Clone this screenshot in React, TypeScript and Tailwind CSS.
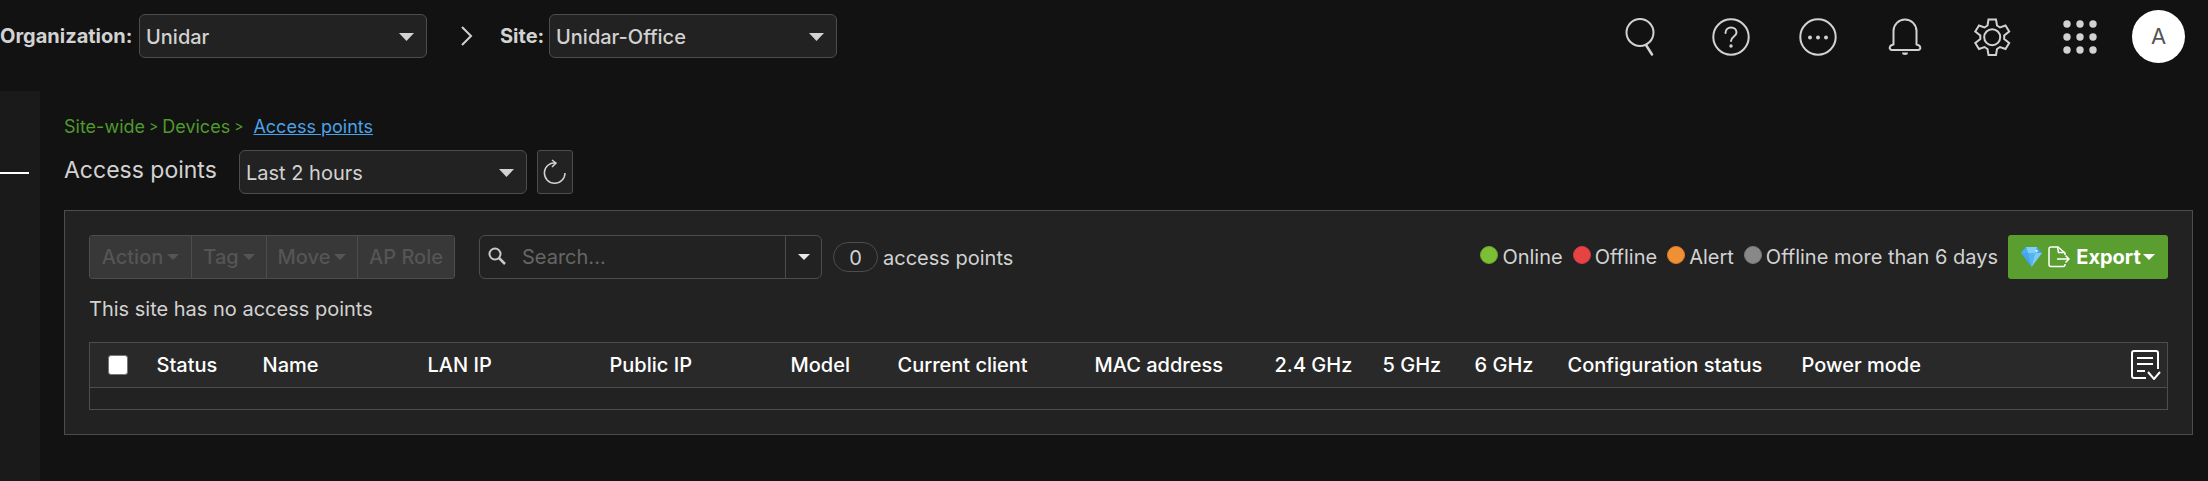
import type { ReactNode } from "react";

const columns = [
  { label: "Status", width: "w-[106px]" },
  { label: "Name", width: "w-[165px]" },
  { label: "LAN IP", width: "w-[182px]" },
  { label: "Public IP", width: "w-[181px]" },
  { label: "Model", width: "w-[107px]" },
  { label: "Current client", width: "w-[197px]" },
  { label: "MAC address", width: "w-[180px]" },
  { label: "2.4 GHz", width: "w-[108px]" },
  { label: "5 GHz", width: "w-[92px]" },
  { label: "6 GHz", width: "w-[93px]" },
  { label: "Configuration status", width: "w-[234px]" },
  { label: "Power mode", width: "" },
];

const legend = [
  { label: "Online", color: "bg-[#7bbf35] border-[#6aa82c]" },
  { label: "Offline", color: "bg-[#e84343] border-[#d83a4a]" },
  { label: "Alert", color: "bg-[#f09035] border-[#e0792b]" },
  { label: "Offline more than 6 days", color: "bg-[#888888] border-[#7b7b7b]" },
];

const bulkActions = [
  { label: "Action", width: "w-[102px]", caret: true },
  { label: "Tag", width: "w-[75px]", caret: true },
  { label: "Move", width: "w-[91px]", caret: true },
  { label: "AP Role", width: "w-[96px]", caret: false },
];

function Caret({ className = "w-3 h-1.5" }: { className?: string }) {
  return (
    <svg viewBox="0 0 14 8" preserveAspectRatio="none" className={`shrink-0 ${className}`} fill="currentColor" aria-hidden="true">
      <path d="M0 0h14L7 8z" />
    </svg>
  );
}

function Dropdown({ id, label, value, bold }: { id: string; label?: string; value: string; bold?: boolean }) {
  return (
    <div className="relative w-72">
      <select
        id={id}
        aria-label={label}
        className={`h-11 w-full appearance-none rounded-md border border-[#4d4d4d] bg-[#222222] pl-1.5 pr-9 pt-0.5 text-xl text-[#d2d2d2] ${bold ? "font-medium" : ""}`}
      >
        <option>{value}</option>
      </select>
      <Caret className="pointer-events-none absolute right-[13px] top-[19px] h-2 w-[15px] text-[#d2d2d2]" />
    </div>
  );
}

function IconButton({ label, children }: { label: string; children: ReactNode }) {
  return (
    <button type="button" aria-label={label} className="flex size-10 items-center justify-center text-[#d2d2d2]">
      <svg viewBox="0 0 40 40" className="size-10" fill="none" stroke="currentColor" strokeWidth="2" strokeLinejoin="round" strokeLinecap="round">
        {children}
      </svg>
    </button>
  );
}

function Header() {
  return (
    <header className="flex h-[91px] items-start justify-between pr-[23px]">
      <div className="flex items-center pt-3.5 text-[#d2d2d2]">
        <label htmlFor="organization" className="w-[139px] whitespace-nowrap text-xl font-bold">
          Organization:
        </label>
        <Dropdown id="organization" value="Unidar" bold />
        <svg viewBox="0 0 12 20" className="ml-[34px] mr-[27px] h-5 w-3" fill="none" stroke="currentColor" strokeWidth="2" aria-hidden="true">
          <path d="M1 1l9 9-9 9" />
        </svg>
        <label htmlFor="site" className="w-[49px] whitespace-nowrap text-xl font-bold">
          Site:
        </label>
        <Dropdown id="site" value="Unidar-Office" bold />
      </div>

      <div className="flex items-center gap-[47px] pt-2.5">
        <IconButton label="Search">
          <ellipse cx="16" cy="15.500" rx="13.500" ry="13.500" />
          <path d="M22 28l6 9.500" strokeWidth="2.5" />
        </IconButton>
        <IconButton label="Help">
          <circle cx="20" cy="20" r="17.7" />
          <path d="M14.500 16c0-3.500 2.500-5.500 5.500-5.500s5.500 2 5.500 5c0 4-5.500 4-5.500 8.500" />
          <circle cx="20" cy="29" r="1.700" fill="currentColor" stroke="none" />
        </IconButton>
        <IconButton label="More">
          <circle cx="20" cy="20" r="17.7" />
          <g fill="currentColor" stroke="none">
            <circle cx="12" cy="20.500" r="2" />
            <circle cx="20" cy="20.500" r="2" />
            <circle cx="28" cy="20.500" r="2" />
          </g>
        </IconButton>
        <IconButton label="Notifications">
          <path d="M8.500 27.500V14a11.500 11.500 0 0 1 23 0v13.500c4.500 .5 5 5.500 1.500 5.500H7c-3.500 0-3-5 1.500-5.500z" />
          <path d="M17 35.500h6a3 2.500 0 0 1-6 0z" fill="currentColor" stroke="none" />
        </IconButton>
        <IconButton label="Settings">
          <path
            strokeLinejoin="miter"
            d="M16.500 2.500h7.500l1 6 3 2 5.500-2 3.700 6-5 4v3.500l5 4-3.700 6-5.500-2-3 2-1 6h-7.500l-1-6-3-2-5.500 2-3.700-6 5-4v-3.500l-5-4 3.700-6 5.500 2 3-2z"
          />
          <circle cx="20.200" cy="20.200" r="8" />
        </IconButton>
        <IconButton label="Apps">
          <g fill="currentColor" stroke="none">
            {[7, 20, 33].map((y) => [8, 21, 34].map((x) => <circle key={`${x}-${y}`} cx={x} cy={y} r="3.700" />))}
          </g>
        </IconButton>
        <button type="button" aria-label="Account" className="-ml-[14px] size-[53px] rounded-full bg-white text-[22px] text-[#555555]">
          A
        </button>
      </div>
    </header>
  );
}

function Toolbar() {
  return (
    <div className="flex items-center">
      <div className="flex overflow-hidden rounded-[3px] border border-[#4d4d4d]">
        {bulkActions.map((action) => (
          <button
            key={action.label}
            type="button"
            disabled
            className={`flex h-[42px] shrink-0 items-center justify-center gap-1 whitespace-nowrap border-r border-[#4d4d4d] bg-[#383838] text-xl font-medium text-[#555555] last:border-r-0 ${action.width}`}
          >
            {action.label}
            {action.caret && <Caret />}
          </button>
        ))}
      </div>

      <div className="ml-6 flex h-11 w-[343px] items-center rounded-md border border-[#4d4d4d]">
        <svg viewBox="0 0 18 18" className="mb-0.5 ml-2 mr-4 size-[18px] shrink-0 text-[#c8c8c8]" fill="none" stroke="currentColor" strokeWidth="2" aria-hidden="true">
          <circle cx="7" cy="7" r="5.500" />
          <path d="M11 11l6 6" strokeWidth="2.500" />
        </svg>
        <input
          type="text"
          aria-label="Search access points"
          placeholder="Search..."
          className="h-full min-w-0 flex-1 bg-transparent text-xl text-[#d2d2d2] placeholder:text-[#666666]"
        />
        <button type="button" aria-label="Search options" className="flex h-full w-9 items-center justify-center border-l border-[#4d4d4d] text-[#e8e8e8]">
          <Caret />
        </button>
      </div>

      <span className="ml-[11px] flex h-[30px] w-[45px] items-center justify-center rounded-full border border-[#4d4d4d] pt-0.5 text-xl">0</span>
      <span className="ml-[5px] pt-0.5 text-xl">access points</span>

      <ul className="ml-auto flex items-center gap-2.5 whitespace-nowrap text-xl">
        {legend.map((item) => (
          <li key={item.label} className="flex items-center gap-1">
            <span className={`mb-1 size-[18px] rounded-full border ${item.color}`} />
            {item.label}
          </li>
        ))}
      </ul>

      <button type="button" className="ml-2.5 flex h-11 w-40 shrink-0 items-center justify-center gap-1.5 rounded-[3px] bg-[#5a9e2f] text-xl font-bold text-white">
        <svg viewBox="0 0 21 20" className="h-5 w-[21px] shrink-0" aria-hidden="true">
          <path d="M5 0h11l5 6-10.500 14L0 6z" fill="#42a5ee" />
          <path d="M5 0h11l-2 6H7z" fill="#7fd0f8" />
          <path d="M14 6h7L10.500 20z" fill="#7fc9f5" />
          <path d="M7 6h7l-3.500 14z" fill="#56b4f2" />
          <path d="M5 0L0 6h7z" fill="#4aaef0" />
          <circle cx="15.500" cy="4" r="1.200" fill="#d8f2ff" />
        </svg>
        <svg viewBox="0 0 22 22" className="size-[22px] shrink-0" fill="none" stroke="currentColor" strokeWidth="1.500" aria-hidden="true">
          <path d="M17 18v.5a2 2 0 0 1-2 2H3a2 2 0 0 1-2-2V3a2 2 0 0 1 2-2h7l7 6v2" />
          <path d="M9.500 1l1 5.500H17M9 13h12M17.500 9.500L21 13l-3.500 3.500" />
        </svg>
        <span>Export</span>
        <Caret className="-ml-1 h-1.5 w-3" />
      </button>
    </div>
  );
}

function DeviceTable() {
  return (
    <table className="w-full table-fixed border-collapse border border-[#4d4d4d] text-xl">
      <thead>
        <tr className="h-[45px] bg-[#292929] text-left text-white">
          <th className="w-[67px] pl-[18px]">
            <input
              type="checkbox"
              aria-label="Select all access points"
              className="block size-5 appearance-none rounded-[3px] border border-[#767676] bg-white"
            />
          </th>
          {columns.map((column) => (
            <th key={column.label} className={`whitespace-nowrap font-medium ${column.width}`}>
              {column.label}
            </th>
          ))}
          <th className="w-[37px]">
            <button type="button" aria-label="Choose columns" className="block">
              <svg viewBox="0 0 30 30" className="size-[30px]" fill="none" stroke="currentColor" strokeWidth="2" aria-hidden="true">
                <path d="M15 28H3a2 2 0 0 1-2-2V3a2 2 0 0 1 2-2h22a2 2 0 0 1 2 2v16M6 8h16M6 14h16M6 21h8" />
                <path d="M17 22l6 7 6-7" />
              </svg>
            </button>
          </th>
        </tr>
      </thead>
      <tbody>
        <tr className="h-[22px] border-t border-[#4d4d4d]">
          <td colSpan={14} />
        </tr>
      </tbody>
    </table>
  );
}

export default function App() {
  return (
    <div className="flex min-h-screen flex-col bg-[#121212] font-['Inter','Liberation_Sans',sans-serif] text-[#d2d2d2]">
      <Header />
      <div className="flex flex-1">
        <aside className="w-10 shrink-0 bg-[#1a1a1a] pt-[81px]">
          <div className="h-0.5 w-[29px] bg-white" />
        </aside>
        <main className="min-w-0 flex-1 pl-6 pr-[15px] pt-[23px]">
          <nav aria-label="Breadcrumb" className="flex h-6 items-center gap-1 text-[18px] text-[#4f9a2c]">
            <a href="#site-wide">Site-wide</a>
            <span className="text-sm">&gt;</span>
            <a href="#devices">Devices</a>
            <span className="text-sm">&gt;</span>
            <a href="#access-points" className="ml-1.5 text-[#4aa3e8] underline">
              Access points
            </a>
          </nav>

          <div className="mt-3 flex items-center">
            <h1 className="w-[175px] pb-1 text-[23px]">Access points</h1>
            <Dropdown id="period" label="Time period" value="Last 2 hours" />
            <button type="button" aria-label="Refresh" className="ml-2.5 flex h-11 w-9 items-center justify-center rounded-[3px] border border-[#4d4d4d] bg-[#222222]">
              <svg viewBox="0 0 24 26" className="h-[26px] w-6" fill="none" stroke="currentColor" strokeWidth="1.500" aria-hidden="true">
                <path d="M22 14a10.300 10.300 0 1 1-10-10.300M9 1l4 3-4 4" />
              </svg>
            </button>
          </div>

          <section className="mt-4 border border-[#4d4d4d] bg-[#222222] px-6 pb-6 pt-6">
            <Toolbar />
            <p className="mb-[19px] mt-4 h-7 text-xl leading-7">This site has no access points</p>
            <DeviceTable />
          </section>
        </main>
      </div>
    </div>
  );
}
